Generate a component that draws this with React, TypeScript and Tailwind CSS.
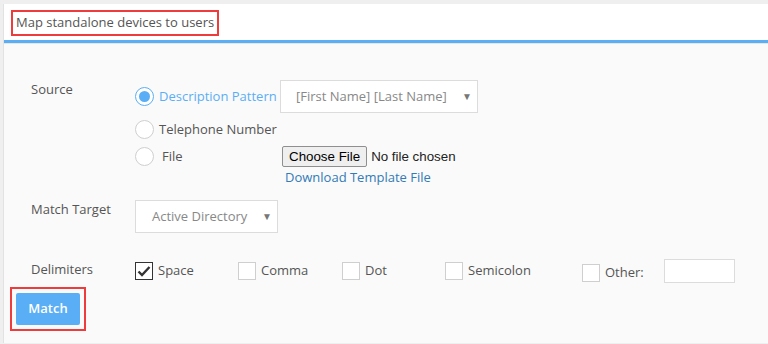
import React, { useState } from 'react';

const delimitadores = [
  { id: 'space', label: 'Space', width: 'w-[103px]' },
  { id: 'comma', label: 'Comma', width: 'w-[104px]' },
  { id: 'dot', label: 'Dot', width: 'w-[103px]' },
  { id: 'semicolon', label: 'Semicolon', width: 'w-[137px]' },
];

function Radio({ checked }: { checked?: boolean }) {
  return (
    <span
      className={`flex items-center justify-center w-[19px] h-[19px] rounded-full border bg-white shrink-0 ${
        checked ? 'border-[#5aaef5]' : 'border-[#cfcfcf]'
      }`}
    >
      {checked && <span className="w-[11px] h-[11px] rounded-full bg-[#5aaef5]" />}
    </span>
  );
}

function Checkbox({ checked }: { checked?: boolean }) {
  return (
    <span
      className={`flex items-center justify-center w-[18px] h-[18px] border bg-white shrink-0 ${
        checked ? 'border-[#333]' : 'border-[#cfcfcf]'
      }`}
    >
      {checked && (
        <svg width="14" height="12" viewBox="0 0 14 12">
          <path d="M1.5 6.5 L5 10 L12.5 2" fill="none" stroke="#333" strokeWidth="2.4" />
        </svg>
      )}
    </span>
  );
}

export default function App() {
  const [marcados] = useState<string[]>(['space']);

  return (
    <div
      className="w-[768px] h-[344px] bg-[#efefef] pt-[4px] pl-[3px] text-[13px] text-[#555] overflow-hidden"
      style={{ fontFamily: '"Open Sans", sans-serif' }}
    >
      <div className="h-[339px] border-l border-[#e2e2e2] bg-[#fafafa] flex flex-col">
        {/* encabezado */}
        <div className="h-[36px] bg-white flex items-start pl-[7px] pt-[6px]">
          <div className="border-2 border-[#ee3b3b] h-[26px] px-[3px] flex items-center">
            Map standalone devices to users
          </div>
        </div>
        <div className="h-[3px] bg-[#5aaef5]" />
        <div className="h-[1px] bg-[#e6e6e6]" />

        <div className="flex flex-col pl-[27px] pt-[36px]">
          {/* Source */}
          <div className="flex">
            <div className="w-[104px] leading-[18px]">Source</div>
            <div className="flex flex-col">
              <div className="flex items-center h-[33px]">
                <div className="w-[145px] flex items-center">
                  <Radio checked />
                  <span className="ml-[5px] text-[#5aaef5]">Description Pattern</span>
                </div>
                <div className="w-[198px] h-[33px] border border-[#dcdcdc] bg-white flex items-center pl-[15px] pr-[5px] text-[#888]">
                  <span className="flex-1">[First Name] [Last Name]</span>
                  <span className="text-[10px] text-[#777]">▼</span>
                </div>
              </div>
              <div className="flex items-center h-[19px] mt-[7px]">
                <Radio />
                <span className="ml-[5px]">Telephone Number</span>
              </div>
              <div className="flex items-center h-[21px] mt-[7px]">
                <div className="w-[147px] flex items-center">
                  <Radio />
                  <span className="ml-[8px]">File</span>
                </div>
                <div
                  className="flex items-center text-[13.33px] text-[#222]"
                  style={{ fontFamily: '"Liberation Sans", Arial, sans-serif' }}
                >
                  <span className="h-[21px] px-[6px] border border-[#8f8f8f] rounded-[2px] bg-[#efefef] text-black flex items-center">
                    Choose File
                  </span>
                  <span className="ml-[4px]">No file chosen</span>
                </div>
              </div>
              <div className="ml-[150px] mt-[1px] leading-[18px] text-[#337ab7]">Download Template File</div>
            </div>
          </div>

          {/* Match Target */}
          <div className="flex mt-[14px]">
            <div className="w-[104px] leading-[18px]">Match Target</div>
            <div className="w-[143px] h-[33px] border border-[#dcdcdc] bg-white flex items-center pl-[16px] pr-[5px] text-[#888]">
              <span className="flex-1">Active Directory</span>
              <span className="text-[10px] text-[#777]">▼</span>
            </div>
          </div>

          {/* Delimiters */}
          <div className="flex items-center h-[24px] mt-[26px]">
            <div className="w-[104px] -mt-[2px]">Delimiters</div>
            {delimitadores.map((d) => (
              <div key={d.id} className={`${d.width} flex items-center`}>
                <Checkbox checked={marcados.includes(d.id)} />
                <span className="ml-[5px]">{d.label}</span>
              </div>
            ))}
            <div className="w-[82px] flex items-center mt-[3px]">
              <Checkbox />
              <span className="ml-[5px]">Other:</span>
            </div>
            <div className="w-[71px] h-[24px] border border-[#dcdcdc] bg-white" />
          </div>
        </div>

        {/* Botón */}
        <div className="pl-[6px] mt-[4px]">
          <div className="inline-flex border-2 border-[#ee3b3b] p-[4px]">
            <button className="w-[64px] h-[32px] rounded-[2px] bg-[#5aaef5] text-white font-semibold text-[13px]">
              Match
            </button>
          </div>
        </div>
      </div>
    </div>
  );
}
